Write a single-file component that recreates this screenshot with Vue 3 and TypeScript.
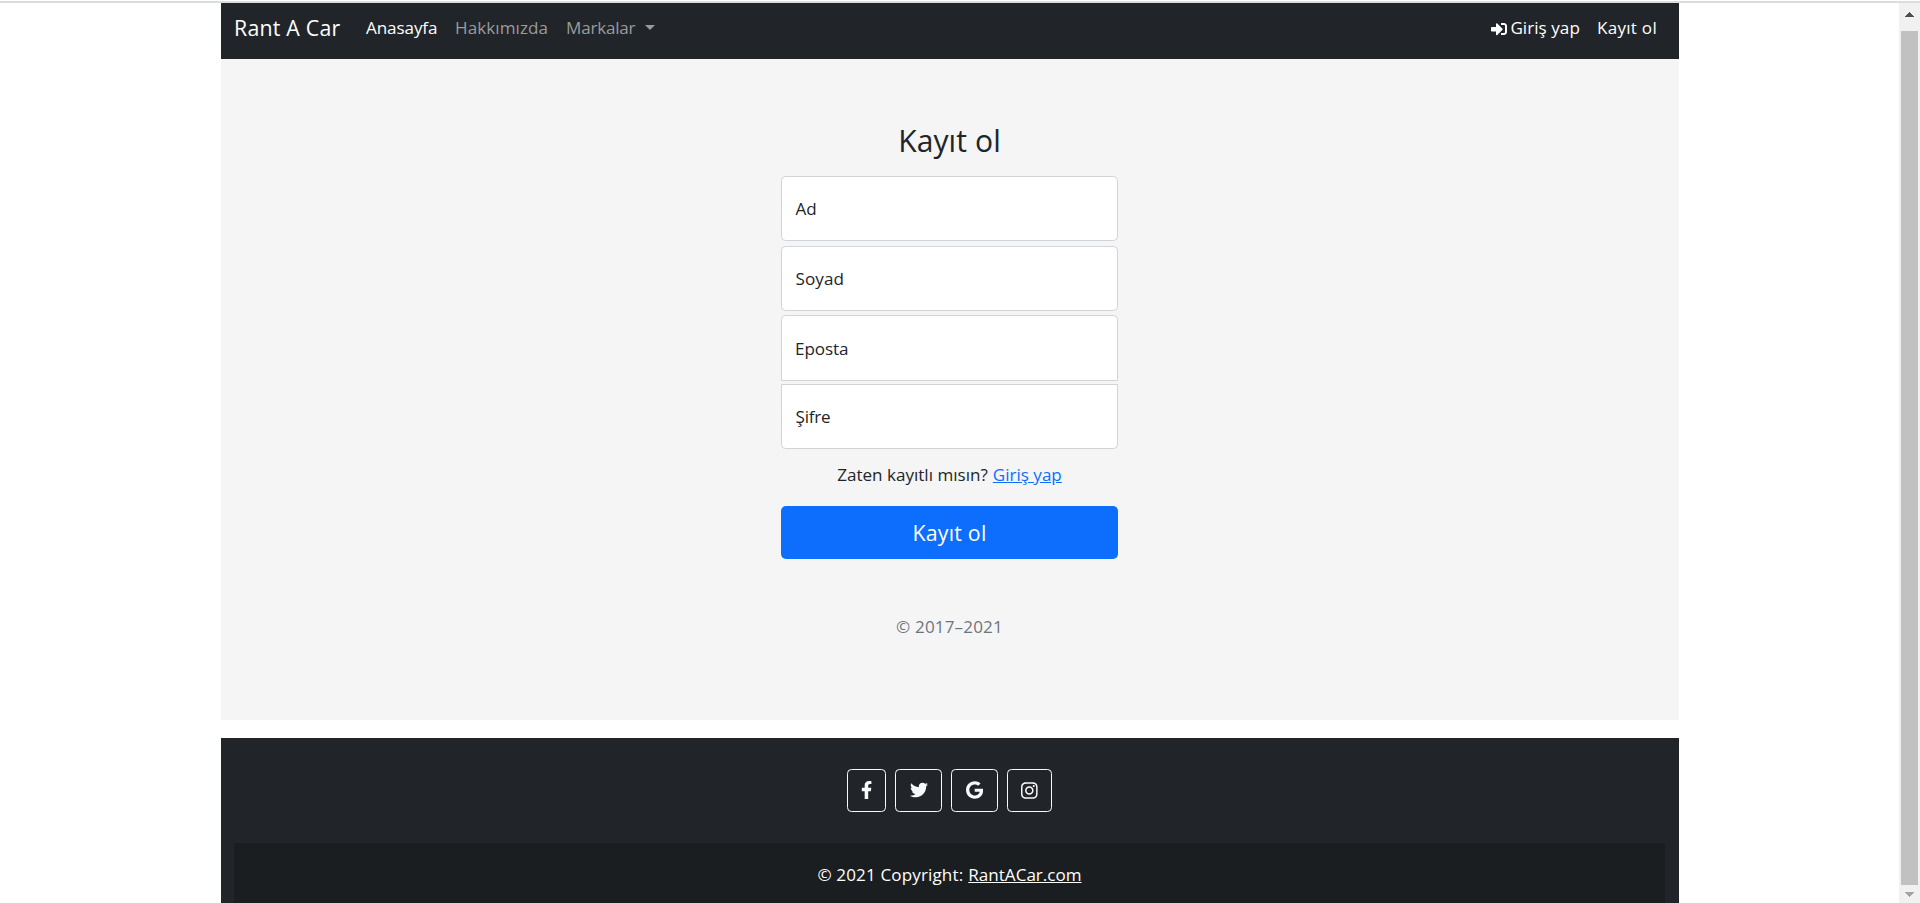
<script setup lang="ts">
interface Field { id: string; label: string; type: string }
interface Social { name: string; viewBox: string; path: string }

const fields: Field[] = [
  { id: 'ad', label: 'Ad', type: 'text' },
  { id: 'soyad', label: 'Soyad', type: 'text' },
  { id: 'eposta', label: 'Eposta', type: 'email' },
  { id: 'sifre', label: 'Şifre', type: 'password' },
]

const socials: Social[] = [
  { name: 'facebook', viewBox: '0 0 320 512', path: 'M279.14 288l14.22-92.66h-88.91v-60.13c0-25.35 12.42-50.06 52.24-50.06h40.42V6.26S260.43 0 225.36 0c-73.22 0-121.08 44.38-121.08 124.72v70.62H22.89V288h81.39v224h100.17V288z' },
  { name: 'twitter', viewBox: '0 0 512 512', path: 'M459.37 151.716c.325 4.548.325 9.097.325 13.645 0 138.72-105.583 298.558-298.558 298.558-59.452 0-114.68-17.219-161.137-47.106 8.447.974 16.568 1.299 25.34 1.299 49.055 0 94.213-16.568 130.274-44.832-46.132-.975-84.792-31.188-98.112-72.772 6.498.974 12.995 1.624 19.818 1.624 9.421 0 18.843-1.3 27.614-3.573-48.081-9.747-84.143-51.98-84.143-102.985v-1.299c13.969 7.797 30.214 12.67 47.431 13.319-28.264-18.843-46.781-51.005-46.781-87.391 0-19.492 5.197-37.36 14.294-52.954 51.655 63.675 129.3 105.258 216.365 109.807-1.624-7.797-2.599-15.918-2.599-24.04 0-57.828 46.782-104.934 104.934-104.934 30.213 0 57.502 12.67 76.67 33.137 23.715-4.548 46.456-13.32 66.599-25.34-7.798 24.366-24.366 44.833-46.132 57.827 21.117-2.273 41.584-8.122 60.426-16.243-14.292 20.791-32.161 39.308-52.628 54.253z' },
  { name: 'google', viewBox: '0 0 488 512', path: 'M488 261.8C488 403.3 391.1 504 248 504 110.8 504 0 393.2 0 256S110.8 8 248 8c66.8 0 123 24.5 166.3 64.9l-67.5 64.9C258.5 52.6 94.3 116.6 94.3 256c0 86.5 69.1 156.6 153.7 156.6 98.2 0 135-70.4 140.8-106.9H248v-85.3h236.1c2.3 12.7 3.9 24.9 3.9 41.4z' },
  { name: 'instagram', viewBox: '0 0 448 512', path: 'M224.1 141c-63.6 0-114.9 51.3-114.9 114.9s51.3 114.9 114.9 114.9S339 319.5 339 255.9 287.7 141 224.1 141zm0 189.6c-41.1 0-74.7-33.5-74.7-74.7s33.5-74.7 74.7-74.7 74.7 33.5 74.7 74.7-33.6 74.7-74.7 74.7zm146.4-194.3c0 14.9-12 26.8-26.8 26.8-14.9 0-26.8-12-26.8-26.8s12-26.8 26.8-26.8 26.8 12 26.8 26.8zm76.1 27.2c-1.7-35.9-9.9-67.7-36.2-93.9-26.2-26.2-58-34.4-93.9-36.2-37-2.1-147.9-2.1-184.9 0-35.8 1.7-67.6 9.9-93.9 36.1s-34.4 58-36.2 93.9c-2.1 37-2.1 147.9 0 184.9 1.7 35.9 9.9 67.7 36.2 93.9s58 34.4 93.9 36.2c37 2.1 147.9 2.1 184.9 0 35.9-1.7 67.7-9.9 93.9-36.2 26.2-26.2 34.4-58 36.2-93.9 2.1-37 2.1-147.8 0-184.8zM398.8 388c-7.8 19.6-22.9 34.7-42.6 42.6-29.5 11.7-99.5 9-132.1 9s-102.7 2.6-132.1-9c-19.6-7.8-34.7-22.9-42.6-42.6-11.7-29.5-9-99.5-9-132.1s-2.6-102.7 9-132.1c7.8-19.6 22.9-34.7 42.6-42.6 29.5-11.7 99.5-9 132.1-9s102.7-2.6 132.1 9c19.6 7.8 34.7 22.9 42.6 42.6 11.7 29.5 9 99.5 9 132.1s2.7 102.7-9 132.1z' },
]
</script>

<template>
  <div class="window">
    <div class="page">
      <nav class="navbar">
        <a class="brand">Rant A Car</a>
        <a class="nav-link home">Anasayfa</a>
        <a class="nav-link muted about">Hakkımızda</a>
        <a class="nav-link muted brands">Markalar<span class="caret"></span></a>
        <div class="account">
          <a class="nav-link login">
            <svg class="login-icon" viewBox="0 0 512 512"><path d="M416 448h-84c-6.6 0-12-5.4-12-12v-40c0-6.6 5.4-12 12-12h84c17.7 0 32-14.3 32-32V160c0-17.7-14.3-32-32-32h-84c-6.6 0-12-5.4-12-12V76c0-6.6 5.4-12 12-12h84c53 0 96 43 96 96v192c0 53-43 96-96 96zm-47-201L201 79c-15-15-41-4.5-41 17v96H24c-13.3 0-24 10.7-24 24v96c0 13.3 10.7 24 24 24h136v96c0 21.5 26 32 41 17l168-168c9.3-9.4 9.3-24.6 0-34z" /></svg>
            <span>Giriş yap</span>
          </a>
          <a class="nav-link register">Kayıt ol</a>
        </div>
      </nav>

      <main class="content">
        <form class="signup" @submit.prevent>
          <h1>Kayıt ol</h1>
          <div v-for="f in fields" :key="f.id" class="field" :class="f.id">
            <input :id="f.id" :type="f.type" />
            <label :for="f.id">{{ f.label }}</label>
          </div>
          <p class="hint"><span class="question">Zaten kayıtlı mısın?</span><a class="hint-link">Giriş yap</a></p>
          <button type="submit">Kayıt ol</button>
          <p class="years">© 2017–2021</p>
        </form>
      </main>

      <footer class="footer">
        <div class="socials">
          <a v-for="s in socials" :key="s.name" class="social" :class="s.name">
            <svg :viewBox="s.viewBox"><path :d="s.path" /></svg>
          </a>
        </div>
        <div class="copyright"><span class="notice">© 2021 Copyright:</span><a class="site">RantACar.com</a></div>
      </footer>
    </div>

    <div class="scrollbar">
      <svg class="arrow up" viewBox="0 0 9 5"><path d="M4 0h1v1h1v1h1v1h1v1h1v1H0V4h1V3h1V2h1V1h1z" /></svg>
      <div class="thumb"></div>
      <svg class="arrow down" viewBox="0 0 9 5"><path d="M0 0h9v1H8v1H7v1H6v1H5v1H4V4H3V3H2V2H1V1H0z" /></svg>
    </div>
  </div>
</template>

<style>
body {
  margin: 0;
  overflow: hidden;
  background: #fff;
}
</style>

<style scoped>
* {
  box-sizing: border-box;
}
.window {
  display: flex;
  justify-content: space-between;
  height: 903px;
  padding-top: 1px;
  background: linear-gradient(#fff 1px, #dadce0 1px, #dadce0 3px, #fff 3px);
  font: 17.07px/26px "Open Sans", "Noto Sans", sans-serif;
  color: #212529;
}
.page {
  display: flex;
  flex-direction: column;
  width: 1458px;
  margin: 2px 0 0 221px;
}
.navbar {
  display: flex;
  align-items: center;
  flex: none;
  height: 56px;
  padding: 0 22px 7px 13px;
  background: #212529;
  color: #fff;
  white-space: nowrap;
}
.brand {
  width: 132px;
  font-size: 21.34px;
  letter-spacing: 0.217px;
}
.nav-link.home {
  width: 89px;
  letter-spacing: -0.09px;
}
.nav-link.about {
  width: 111px;
  letter-spacing: 0.074px;
}
.nav-link.brands {
  display: flex;
  align-items: center;
  letter-spacing: -0.219px;
}
.muted {
  color: #999b9d;
}
.caret {
  margin: 0 0 1px 10px;
  border: 5px solid transparent;
  border-top-color: currentColor;
  border-bottom: 0;
}
.account {
  display: flex;
  margin-left: auto;
}
.login {
  display: flex;
  align-items: center;
  margin-right: 17px;
  letter-spacing: 0.052px;
}
.login-icon {
  width: 16px;
  height: 16px;
  margin: 2px 3px 0 0;
  fill: #fff;
}
.register {
  letter-spacing: 0.277px;
}
.content {
  flex: none;
  height: 661px;
  padding-top: 62px;
  background: #f5f5f5;
}
.signup {
  display: flex;
  flex-direction: column;
  width: 337px;
  margin-left: 560px;
  text-align: center;
}
h1 {
  margin: 0 0 15px;
  font-size: 30.07px;
  font-weight: 400;
  line-height: 40px;
  letter-spacing: 0.09px;
}
.field {
  display: grid;
  align-items: center;
  height: 65px;
  margin-bottom: 5px;
  text-align: left;
}
.field > * {
  grid-area: 1 / 1;
}
.field input {
  width: 100%;
  height: 100%;
  margin: 0;
  border: 1px solid #ced4da;
  border-radius: 4.4px;
  background: #fff;
  outline: 0;
}
.field label {
  padding-left: 14.5px;
}
.soyad {
  margin-bottom: 4px;
}
.soyad label {
  letter-spacing: 0.088px;
}
.eposta {
  height: 66px;
  margin-bottom: 3px;
}
.eposta label {
  padding: 2px 0 0 14px;
  letter-spacing: -0.08px;
}
.eposta input {
  border-bottom-left-radius: 0;
  border-bottom-right-radius: 0;
}
.sifre {
  margin-bottom: 13px;
}
.sifre label {
  letter-spacing: -0.219px;
}
.sifre input {
  border-top-left-radius: 0;
  border-top-right-radius: 0;
}
.hint {
  display: flex;
  justify-content: center;
  gap: 5px;
  margin: 0 0 18px;
}
.hint-link {
  color: #0d6efd;
  text-decoration: underline;
  letter-spacing: 0;
}
button {
  height: 53px;
  margin: 0 0 55px;
  padding: 0;
  border: 0;
  border-radius: 5px;
  background: #0d6efd;
  color: #fff;
  font: 21.34px/53px "Open Sans", "Noto Sans", sans-serif;
  letter-spacing: 0.2px;
}
.years {
  margin: 0;
  color: #6c757d;
  letter-spacing: 0.15px;
}
.footer {
  flex: 1;
  display: flex;
  flex-direction: column;
  margin-top: 18px;
  padding: 31px 14px 0 13px;
  background: #212529;
  color: #fff;
}
.socials {
  display: flex;
  justify-content: center;
  gap: 9px;
  height: 43px;
  margin-bottom: 31px;
}
.social {
  display: flex;
  align-items: center;
  justify-content: center;
  width: 47px;
  padding-bottom: 1px;
  border: 1px solid #f8f9fa;
  border-radius: 4.4px;
}
.social.facebook {
  width: 39px;
}
.social.instagram {
  width: 45px;
}
.social svg {
  height: 18px;
  fill: #f8f9fa;
}
.social.instagram svg {
  height: 19px;
}
.copyright {
  flex: 1;
  display: flex;
  justify-content: center;
  gap: 5px;
  padding-top: 19px;
  background: #1b1e21;
}
.notice {
  letter-spacing: 0.13px;
}
.site {
  text-decoration: underline;
  letter-spacing: 0;
}
.scrollbar {
  display: flex;
  flex-direction: column;
  align-items: center;
  width: 21px;
  margin-top: 2px;
  padding-top: 9px;
  background: #f1f1f1;
}
.arrow {
  width: 9px;
  height: 5px;
}
.up {
  fill: #505050;
}
.down {
  fill: #a3a3a3;
}
.thumb {
  width: 17px;
  height: 854px;
  margin: 14px 0 7px;
  background: #c1c1c1;
}
</style>
